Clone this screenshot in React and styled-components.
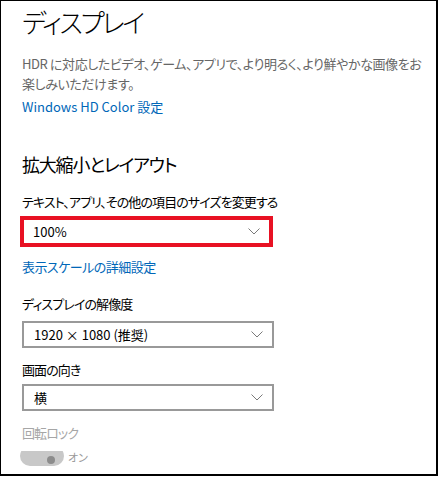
import React from "react";
import styled, { createGlobalStyle } from "styled-components";

const GlobalStyle = createGlobalStyle`
    html, body {
        margin: 0;
        padding: 0;
        background: #fff;
    }
    body {
        font-family: "Noto Sans CJK JP", "Noto Sans", sans-serif;
        font-feature-settings: "palt";
        font-size: 13px;
    }
`;

const Frame = styled.div`
    box-sizing: border-box;
    width: 438px;
    height: 476px;
    border-style: solid;
    border-color: #000;
    border-width: 1px 2px 2px 1px;
    padding: 3px 0 0 21px;
    overflow: hidden;
    display: flex;
    flex-direction: column;
    align-items: flex-start;
`;

const PageTitle = styled.h1`
    margin: 0;
    font-size: 26px;
    font-weight: 300;
    letter-spacing: -2.5px;
    line-height: 36px;
    color: #000;
`;

const Description = styled.p`
    margin: 14px 0 0;
    font-size: 13px;
    letter-spacing: -0.4px;
    line-height: 20px;
    white-space: nowrap;
    color: #666;
`;

const Link = styled.a`
    margin-top: ${props => props.$gap}px;
    font-size: 13px;
    letter-spacing: ${props => (props.$tight ? "-0.5px" : "0")};
    line-height: 20px;
    color: #0067b8;
    text-decoration: none;
    cursor: pointer;
`;

const SectionTitle = styled.h2`
    margin: 33px 0 0;
    font-size: 18px;
    font-weight: 400;
    letter-spacing: -1.2px;
    line-height: 28px;
    color: #000;
`;

const Label = styled.div`
    margin-top: ${props => props.$gap}px;
    font-size: 13px;
    letter-spacing: -0.9px;
    line-height: 20px;
    color: ${props => (props.$disabled ? "#a6a6a6" : "#000")};
`;

const Highlight = styled.div`
    box-sizing: border-box;
    margin: 4px 0 0 -2px;
    width: 253px;
    height: 31px;
    border: 4px solid #e81123;
    display: flex;
`;

const Select = styled.div`
    box-sizing: border-box;
    margin-top: ${props => props.$gap}px;
    width: ${props => (props.$bare ? "100%" : "252px")};
    height: ${props => (props.$bare ? "100%" : "27px")};
    border: ${props => (props.$bare ? "none" : "2px solid #999")};
    padding: 0 9px 0 ${props => (props.$bare ? 9 : 10)}px;
    display: flex;
    align-items: center;
    justify-content: space-between;
    font-size: 13px;
    color: #000;
    background: #fff;
`;

const Chevron = () => (
    <svg width="12" height="7" viewBox="0 0 12 7">
        <polyline
            points="0.5,0.5 6,6 11.5,0.5"
            fill="none"
            stroke="#7a7a7a"
            strokeWidth="1"
        />
    </svg>
);

const ToggleRow = styled.div`
    margin: 8px 0 0 -2px;
    height: 15px;
    display: flex;
    align-items: flex-end;
    gap: 4px;
`;

const TrackClip = styled.div`
    width: 44px;
    height: 15px;
    overflow: hidden;
    display: flex;
    align-items: flex-end;
`;

const Track = styled.div`
    position: relative;
    width: 44px;
    height: 20px;
    flex-shrink: 0;
    border-radius: 10px;
    background: #c8c8c8;
`;

const Knob = styled.div`
    position: absolute;
    right: 9px;
    bottom: 2px;
    width: 8px;
    height: 8px;
    border-radius: 50%;
    background: #8c8c8c;
`;

const ToggleText = styled.span`
    font-size: 11px;
    line-height: 13px;
    color: #9a9a9a;
    margin-bottom: 2px;
`;

export default function App() {
    return (
        <>
            <GlobalStyle />
            <Frame>
                <PageTitle>ディスプレイ</PageTitle>
                <Description>
                    HDR に対応したビデオ、ゲーム、アプリで、より明るく、より鮮やかな画像をお
                    <br />
                    楽しみいただけます。
                </Description>
                <Link $gap={3}>Windows HD Color 設定</Link>

                <SectionTitle>拡大縮小とレイアウト</SectionTitle>
                <Label $gap={14}>テキスト、アプリ、その他の項目のサイズを変更する</Label>
                <Highlight>
                    <Select $bare $gap={0}>
                        100%
                        <Chevron />
                    </Select>
                </Highlight>
                <Link $gap={10} $tight>
                    表示スケールの詳細設定
                </Link>

                <Label $gap={17}>ディスプレイの解像度</Label>
                <Select $gap={7}>
                    1920 × 1080 (推奨)
                    <Chevron />
                </Select>

                <Label $gap={12}>画面の向き</Label>
                <Select $gap={4}>
                    横
                    <Chevron />
                </Select>

                <Label $gap={12} $disabled>
                    回転ロック
                </Label>
                <ToggleRow>
                    <TrackClip>
                        <Track>
                            <Knob />
                        </Track>
                    </TrackClip>
                    <ToggleText>オン</ToggleText>
                </ToggleRow>
            </Frame>
        </>
    );
}
